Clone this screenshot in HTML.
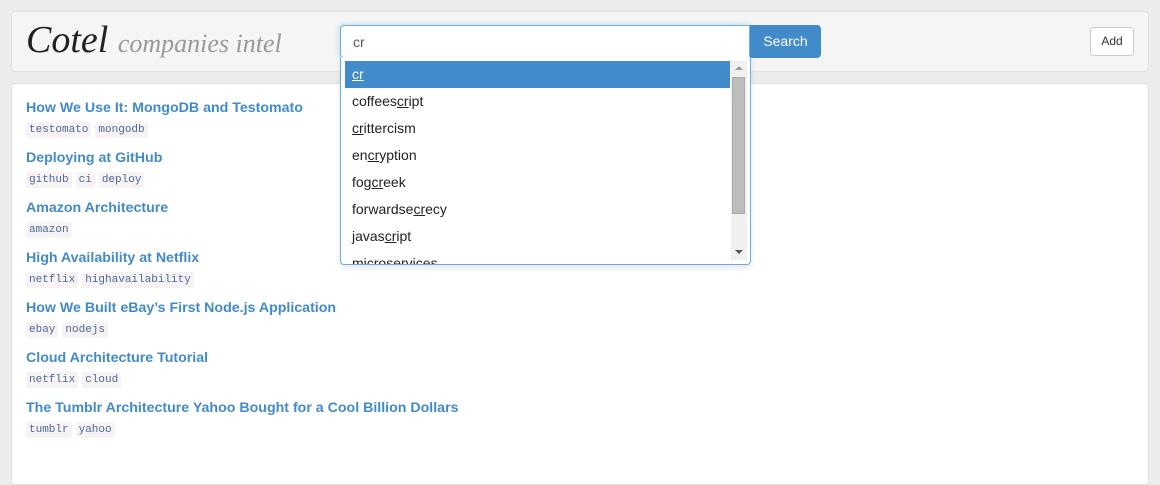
<!DOCTYPE html>
<html><head><style>
body{margin:0;background:#ececec;font-family:"Liberation Sans",Arial,sans-serif;width:1160px;height:444px;overflow:hidden;position:relative}
.hdr{position:absolute;left:11px;top:11px;width:1136px;height:59px;background:#f5f5f5;border:1px solid #e0e0e0;border-radius:4px}
.logo{position:absolute;left:26px;top:18px;font-family:"Liberation Serif",serif;font-style:italic;font-size:38px;color:#222;white-space:nowrap}
.logo span{font-size:26px;color:#999}
.inp{position:absolute;left:340px;top:25px;width:408px;height:31px;border:1px solid #66afe9;border-radius:4px 0 0 4px;background:#fff;box-shadow:0 0 6px rgba(102,175,233,.5)}
.inp div{position:absolute;left:12px;top:8px;font-size:14px;color:#555}
.btn{position:absolute;left:750px;top:25px;width:71px;height:33px;background:#428bca;border-radius:0 4px 4px 0;color:#fff;font-size:14px;text-align:center;line-height:33px}
.add{position:absolute;left:1090px;top:27px;width:42px;height:27px;background:#fff;border:1px solid #ccc;border-radius:3px;font-size:12px;color:#333;text-align:center;line-height:27px}
.main{position:absolute;left:11px;top:83px;width:1136px;height:400px;background:#fff;border:1px solid #e0e0e0;border-radius:4px}
.item{position:absolute;left:26px}
.item b{display:block;font-size:14.2px;color:#428bca;font-weight:bold}
.tags{margin-top:3px}
.tags i{font-style:normal;font-family:"Liberation Mono","DejaVu Sans Mono",monospace;font-size:11px;color:#4a6a9a;background:#f7f2f4;border-radius:3px;padding:2px 3px;margin-right:4px}
.dd{position:absolute;left:340px;top:57px;width:409px;height:207px;background:#fff;border:1px solid #66afe9;border-top:none;border-radius:0 0 4px 4px;overflow:hidden;box-shadow:0 3px 6px rgba(0,0,0,.1)}
.opt{position:absolute;left:4px;width:385px;height:27px;line-height:27px;font-size:14px;color:#222;padding-left:7px;box-sizing:border-box}
.opt u{text-decoration:underline}
.sel{background:#428bca;color:#fff}
.sb{position:absolute;left:390px;top:4px;width:16px;height:199px;background:#f0f0f0}
.th{position:absolute;left:1px;top:16px;width:13px;height:137px;background:#bdbdbd;border:1px solid #aaa;box-sizing:border-box}
</style></head><body>
<div class="hdr"></div>
<div class="logo">Cotel <span>companies intel</span></div>
<div class="inp"><div>cr</div></div>
<div class="btn">Search</div>
<div class="add">Add</div>
<div class="main"></div>
<div class="item" style="top:100px"><b>How We Use It: MongoDB and Testomato</b><div class="tags"><i>testomato</i><i>mongodb</i></div></div>
<div class="item" style="top:150px"><b>Deploying at GitHub</b><div class="tags"><i>github</i><i>ci</i><i>deploy</i></div></div>
<div class="item" style="top:200px"><b>Amazon Architecture</b><div class="tags"><i>amazon</i></div></div>
<div class="item" style="top:250px"><b>High Availability at Netflix</b><div class="tags"><i>netflix</i><i>highavailability</i></div></div>
<div class="item" style="top:300px"><b>How We Built eBay’s First Node.js Application</b><div class="tags"><i>ebay</i><i>nodejs</i></div></div>
<div class="item" style="top:350px"><b>Cloud Architecture Tutorial</b><div class="tags"><i>netflix</i><i>cloud</i></div></div>
<div class="item" style="top:400px"><b>The Tumblr Architecture Yahoo Bought for a Cool Billion Dollars</b><div class="tags"><i>tumblr</i><i>yahoo</i></div></div>
<div class="dd">
<div class="opt sel" style="top:4px"><u>cr</u></div>
<div class="opt" style="top:31px">coffees<u>cr</u>ipt</div>
<div class="opt" style="top:58px"><u>cr</u>ittercism</div>
<div class="opt" style="top:85px">en<u>cr</u>yption</div>
<div class="opt" style="top:112px">fog<u>cr</u>eek</div>
<div class="opt" style="top:139px">forwardse<u>cr</u>ecy</div>
<div class="opt" style="top:166px">javas<u>cr</u>ipt</div>
<div class="opt" style="top:193px">microservices</div>
<div class="sb"><div style="position:absolute;left:4px;top:5px;border:4px solid transparent;border-bottom:4px solid #999;border-top:0"></div><div class="th"></div><div style="position:absolute;left:4px;top:189px;border:4px solid transparent;border-top:4px solid #555;border-bottom:0"></div></div>
</div>
</body></html>
